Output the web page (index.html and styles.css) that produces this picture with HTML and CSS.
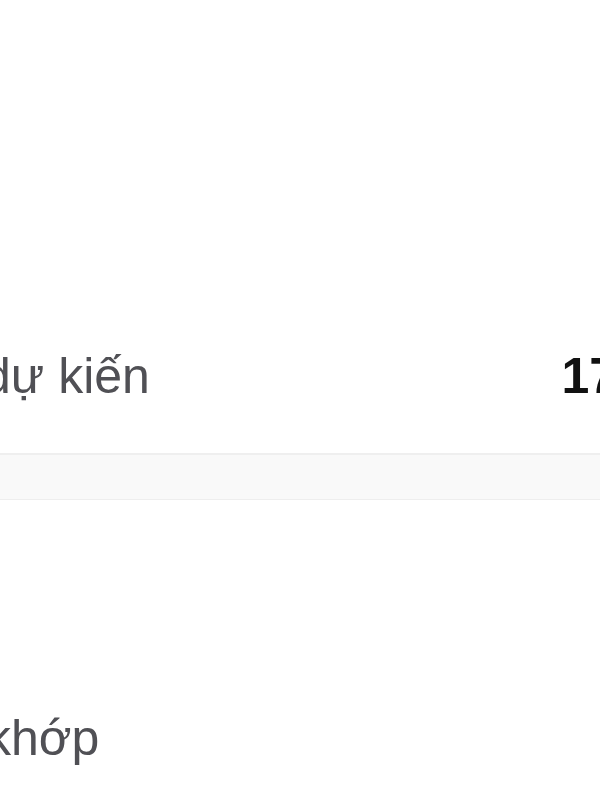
FILE: index.html
```html
<!DOCTYPE html>
<html lang="vi">
<head>
  <meta charset="UTF-8">
  <meta name="viewport" content="width=device-width, initial-scale=1.0">
  <title>Chi tiết</title>
  <link rel="stylesheet" href="styles.css">
</head>
<body>
  <div class="section top">
    <div class="row">
      <span class="label first">dự kiến</span>
      <span class="value">17</span>
    </div>
  </div>
  <div class="divider"></div>
  <div class="section bottom">
    <div class="row">
      <span class="label second">khớp</span>
    </div>
  </div>
</body>
</html>
```

FILE: styles.css
```css
html, body {
  margin: 0;
  padding: 0;
  background: #fff;
  overflow: hidden;
}

body {
  font-family: "Liberation Sans", Arial, sans-serif;
  width: 600px;
  height: 800px;
}

.section.top {
  padding-top: 346px;
  padding-bottom: 47px;
}

.section.bottom {
  padding-top: 208px;
}

.row {
  display: flex;
  justify-content: space-between;
  align-items: baseline;
  font-size: 50px;
  line-height: 60px;
}

.label {
  color: #505055;
}

.label.first {
  margin-left: -17px;
}

.label.second {
  margin-left: -14px;
}

.value {
  color: #111;
  font-weight: bold;
  margin-right: -17px;
}

.divider {
  height: 44px;
  background: #f9f9f9;
  border-top: 2px solid #efefef;
  border-bottom: 1px solid #eeeeee;
}
```
